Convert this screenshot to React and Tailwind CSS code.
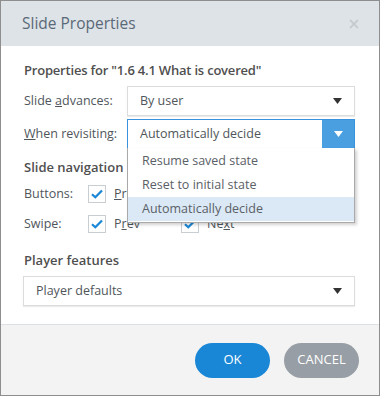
import React from "react";

function Arrow({ color = "#333" }) {
  return (
    <svg width="9" height="6" viewBox="0 0 9 6"><path d="M0 0H9L4.5 6Z" fill={color} /></svg>
  );
}

function Check({ checked = true }) {
  return (
    <div className="w-[18px] h-[18px] border border-[#c9ced3] bg-white flex items-center justify-center">
      {checked && (
        <svg width="12" height="10" viewBox="0 0 12 10"><path d="M1 5.2L4.3 8.3L11 1.5" fill="none" stroke="#1a87d6" strokeWidth="2.2" /></svg>
      )}
    </div>
  );
}

export default function App() {
  return (
    <div className="w-[380px] h-[396px] border border-[#8e8e8e] bg-white flex flex-col relative text-[12.5px] text-[#50565b]" style={{ fontFamily: "'Open Sans', 'Noto Sans', sans-serif" }}>
      <div className="h-[45px] shrink-0 bg-[#dee3e7] flex items-center justify-between pl-[21px] pr-[20px]">
        <span className="text-[15.5px] text-[#5a6978]">Slide Properties</span>
        <svg width="10" height="10" viewBox="0 0 10 10"><path d="M1 1L9 9M9 1L1 9" stroke="#c8cbce" strokeWidth="1.8" /></svg>
      </div>
      <div className="h-[278px] shrink-0 pl-[23px] pr-[24px] flex flex-col">
        <div className="mt-[14px] h-[20px] leading-[20px] text-[13px] font-semibold text-[#4f4f4f] tracking-[-0.2px]">Properties for "1.6 4.1 What is covered"</div>
        <div className="mt-[6px] h-[30px] flex items-center">
          <div className="w-[103px] shrink-0">Slide <span className="underline">a</span>dvances:</div>
          <div className="flex-1 h-[30px] border border-[#dcdcdc] shadow-[0_1px_1px_rgba(0,0,0,0.08)] flex items-center justify-between pl-[12px] pr-[12px]">
            <span>By user</span>
            <Arrow />
          </div>
        </div>
        <div className="mt-[3px] h-[30px] flex items-center">
          <div className="w-[103px] shrink-0"><span className="underline">W</span>hen revisiting:</div>
          <div className="flex-1 h-[30px] border border-[#3a92dc] flex items-stretch">
            <div className="flex-1 flex items-center pl-[12px]">Automatically decide</div>
            <div className="w-[32px] bg-[#4a9fe0] flex items-center justify-center"><Arrow color="#fff" /></div>
          </div>
        </div>
        <div className="mt-[8px] h-[20px] leading-[20px] text-[13px] font-semibold text-[#4f4f4f]">Slide navigation</div>
        <div className="mt-[7px] h-[20px] flex items-center">
          <div className="w-[64px] shrink-0">Buttons:</div>
          <Check />
          <span className="ml-[8px] w-[67px]"><span className="underline">P</span>rev</span>
          <Check />
          <span className="ml-[8px]">Next</span>
        </div>
        <div className="mt-[10px] h-[20px] flex items-center">
          <div className="w-[64px] shrink-0">Swipe:</div>
          <Check />
          <span className="ml-[8px] w-[67px]">P<span className="underline">r</span>ev</span>
          <Check />
          <span className="ml-[8px]">Ne<span className="underline">x</span>t</span>
        </div>
        <div className="mt-[16px] h-[20px] leading-[20px] text-[13px] font-semibold text-[#4f4f4f]">Player features</div>
        <div className="mt-[6px] h-[30px] -ml-[1px] border border-[#dcdcdc] shadow-[0_1px_1px_rgba(0,0,0,0.08)] flex items-center justify-between pl-[12px] pr-[12px]">
          <span>Player defaults</span>
          <Arrow />
        </div>
      </div>
      <div className="flex-1 border-t border-[#dde1e5] bg-[#f3f3f3] flex items-center justify-end gap-[14px] pr-[20px]">
        <button className="w-[75px] h-[35px] rounded-full bg-[#1a87d6] text-white text-[13px] font-medium">OK</button>
        <button className="w-[75px] h-[35px] rounded-full bg-[#979ea5] text-white text-[13px] font-medium">CANCEL</button>
      </div>
      <div className="absolute left-[126px] top-[147px] w-[228px] border border-[#a9a9a9] border-t-0 bg-white shadow-[2px_2px_3px_rgba(0,0,0,0.18)] flex flex-col pt-[1px] pb-[1px] text-[#5a6066]">
        <div className="h-[24px] flex items-center pl-[14px]">Resume saved state</div>
        <div className="h-[24px] flex items-center pl-[14px]">Reset to initial state</div>
        <div className="h-[24px] flex items-center pl-[14px] bg-[#dbe9f7]">Automatically decide</div>
      </div>
    </div>
  );
}
